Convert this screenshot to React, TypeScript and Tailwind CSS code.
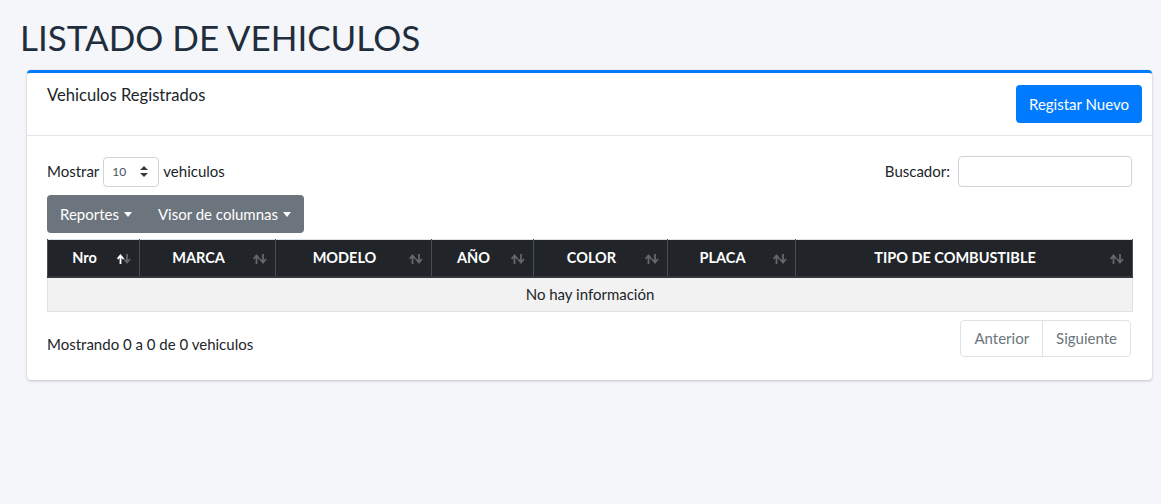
import React from "react";

const columns = [
  { label: "Nro", width: "w-[92px]", active: true },
  { label: "MARCA", width: "w-[136px]" },
  { label: "MODELO", width: "w-[156px]" },
  { label: "AÑO", width: "w-[102px]" },
  { label: "COLOR", width: "w-[134px]" },
  { label: "PLACA", width: "w-[128px]" },
  { label: "TIPO DE COMBUSTIBLE", width: "w-[337px]" },
];

function Caret() {
  return (
    <span className="ml-[5px] inline-block align-middle border-t-[5px] border-x-[4px] border-b-0 border-x-transparent border-t-white" />
  );
}

function SortIcon({ active }: { active?: boolean }) {
  const dim = "rgba(255,255,255,0.3)";
  return (
    <svg className="absolute right-[8px] top-[14px]" width="14" height="10" viewBox="0 0 14 10">
      <path d="M3.5 10 V2 M0.5 5 L3.5 1.5 L6.5 5" stroke={active ? "#fff" : dim} strokeWidth="1.8" fill="none" />
      <path d="M10 0 V8 M7 5 L10 8.5 L13 5" stroke={dim} strokeWidth="1.8" fill="none" />
    </svg>
  );
}

export default function App() {
  return (
    <div className="min-h-[504px] bg-[#f4f6f9] font-['Lato','Liberation_Sans',sans-serif] text-[15px] text-[#212529]">
      <h1 className="pl-5 pt-[15px] text-[35px] leading-[44px] font-normal text-[#1f2d3d] mb-[11px]">
        LISTADO DE VEHICULOS
      </h1>

      <div className="ml-[27px] mr-[9px] rounded bg-white border-t-[3px] border-[#007bff] shadow-[0_0_1px_rgba(0,0,0,0.125),0_1px_3px_rgba(0,0,0,0.2)]">
        {/* header */}
        <div className="flex items-start justify-between pl-5 pr-[10px] py-3 border-b border-[#e3e6e9]">
          <h3 className="text-[16.6px] leading-[21px] font-normal">Vehiculos Registrados</h3>
          <button className="h-[38px] px-[13px] rounded bg-[#007bff] text-white text-[15px]">
            Registar Nuevo
          </button>
        </div>

        {/* body */}
        <div className="p-5">
          <div className="flex items-center justify-between h-[31px]">
            <label className="flex items-center">
              Mostrar
              <span className="mx-1 flex items-center justify-between w-[56px] h-[30px] pl-[8px] pr-[10px] border border-[#ced4da] rounded text-[12px] text-[#495057]">
                10
                <svg width="8" height="11" viewBox="0 0 8 11">
                  <path d="M4 0 L8 4 H0 Z M0 7 H8 L4 11 Z" fill="#343a40" />
                </svg>
              </span>
              vehiculos
            </label>
            <label className="flex items-center">
              Buscador:
              <span className="ml-2 w-[174px] h-[31px] border border-[#ced4da] rounded" />
            </label>
          </div>

          <div className="mt-2 inline-flex h-[38px] rounded bg-[#6c757d] text-white">
            <button className="px-[13px] flex items-center">
              Reportes
              <Caret />
            </button>
            <button className="px-[13px] flex items-center">
              Visor de columnas
              <Caret />
            </button>
          </div>

          <table className="mt-[6px] w-full table-fixed border-collapse border border-[#dee2e6]">
            <colgroup>
              {columns.map((c) => (
                <col key={c.label} className={c.width} />
              ))}
            </colgroup>
            <thead>
              <tr className="bg-[#212529] text-white">
                {columns.map((c) => (
                  <th
                    key={c.label}
                    className="relative h-[37px] pl-3 pr-[30px] text-center text-[14.5px] font-bold border-x border-[#454d55] border-b-2 border-b-[#32383e]"
                  >
                    {c.label}
                    <SortIcon active={c.active} />
                  </th>
                ))}
              </tr>
            </thead>
            <tbody>
              <tr className="bg-[#f2f2f2]">
                <td colSpan={7} className="h-[35px] text-center border border-[#dee2e6]">
                  No hay información
                </td>
              </tr>
            </tbody>
          </table>

          <div className="mt-2 mb-[3px] flex items-start justify-between">
            <div className="pt-[12px] leading-[24px]">Mostrando 0 a 0 de 0 vehiculos</div>
            <div className="mr-px flex h-[37px] rounded border border-[#dee2e6] text-[#6c757d]">
              <span className="px-[13px] flex items-center border-r border-[#dee2e6]">Anterior</span>
              <span className="px-[13px] flex items-center">Siguiente</span>
            </div>
          </div>
        </div>
      </div>
    </div>
  );
}
